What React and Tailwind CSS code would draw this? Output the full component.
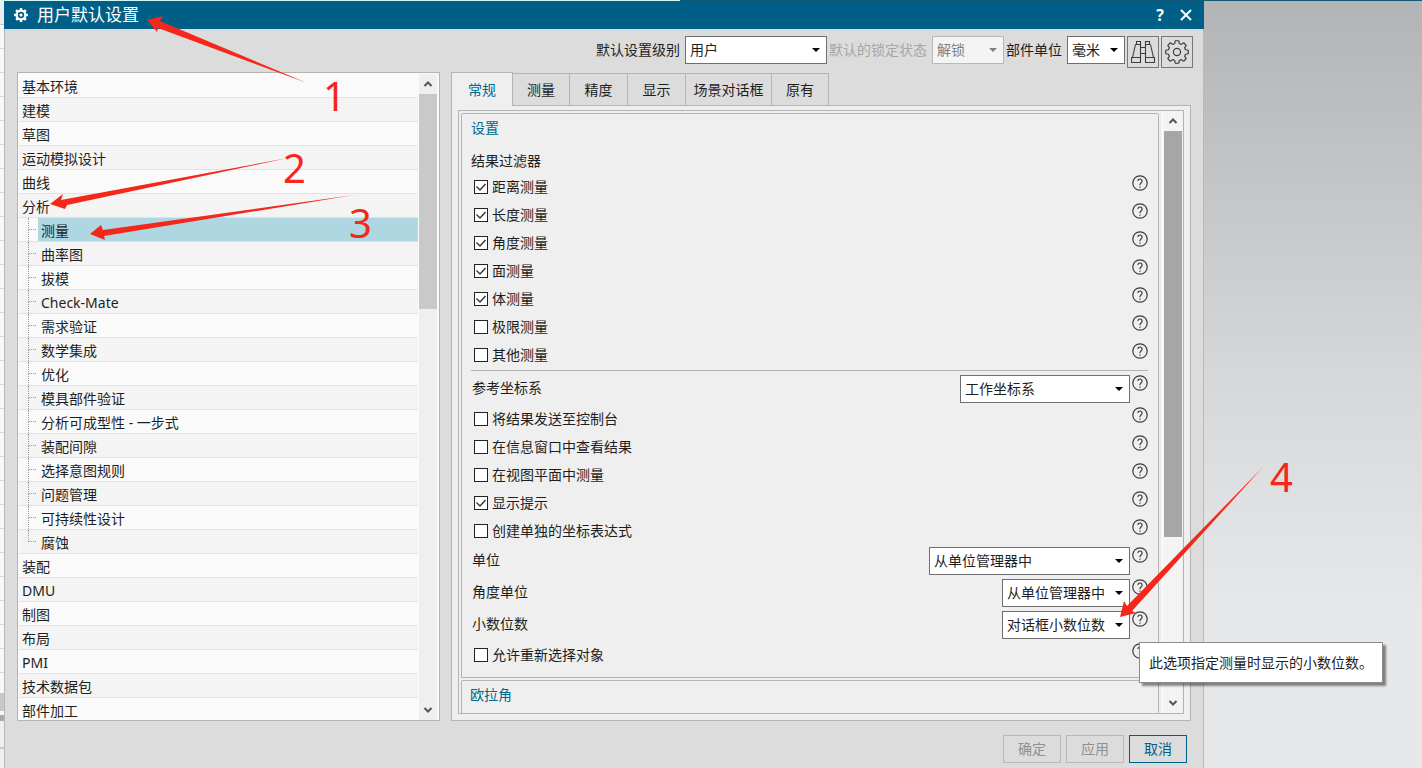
import React, { useState } from 'react';

const TREE = [
  { name: '基本环境' },
  { name: '建模' },
  { name: '草图' },
  { name: '运动模拟设计' },
  { name: '曲线' },
  { name: '分析' },
  { name: '测量', child: true },
  { name: '曲率图', child: true },
  { name: '拔模', child: true },
  { name: 'Check-Mate', child: true },
  { name: '需求验证', child: true },
  { name: '数学集成', child: true },
  { name: '优化', child: true },
  { name: '模具部件验证', child: true },
  { name: '分析可成型性 - 一步式', child: true },
  { name: '装配间隙', child: true },
  { name: '选择意图规则', child: true },
  { name: '问题管理', child: true },
  { name: '可持续性设计', child: true },
  { name: '腐蚀', child: true, last: true },
  { name: '装配' },
  { name: 'DMU' },
  { name: '制图' },
  { name: '布局' },
  { name: 'PMI' },
  { name: '技术数据包' },
  { name: '部件加工' },
];

const TABS = [
  { name: '常规', width: 'w-[62px]' },
  { name: '测量', width: 'w-[57px]' },
  { name: '精度', width: 'w-[58px]' },
  { name: '显示', width: 'w-[58px]' },
  { name: '场景对话框', width: 'w-[86px]' },
  { name: '原有', width: 'w-[57px]' },
];

const FILTERS = [
  { name: '距离测量', on: true },
  { name: '长度测量', on: true },
  { name: '角度测量', on: true },
  { name: '面测量', on: true },
  { name: '体测量', on: true },
  { name: '极限测量', on: false },
  { name: '其他测量', on: false },
];

const OPTIONS = [
  { name: '将结果发送至控制台', on: false },
  { name: '在信息窗口中查看结果', on: false },
  { name: '在视图平面中测量', on: false },
  { name: '显示提示', on: true },
  { name: '创建单独的坐标表达式', on: false },
];

const ARROWS = [
  '147,20 163,16 160,21 307,83 158,28 157,32',
  '50,204 63,194 61,200 288,158 67,205 65,209',
  '90,234 101,225 103,230 354,195 104,236 105,240',
  '1120,617 1124,601 1127,606 1263,467 1132,611 1136,613',
];

const MARKS = [
  { n: '1', x: 323, y: 111 },
  { n: '2', x: 283, y: 183 },
  { n: '3', x: 349, y: 238 },
  { n: '4', x: 1270, y: 492 },
];

// outline of an eight-toothed gear centred on 0,0
const gearPoints = (outer, inner) => {
  const pts = [];
  for (let i = 0; i < 8; i++) {
    [[-15, inner], [-9, outer], [9, outer], [15, inner]].forEach(([deg, r]) => {
      const a = ((i * 45 + deg) * Math.PI) / 180;
      pts.push(`${(r * Math.cos(a)).toFixed(2)},${(r * Math.sin(a)).toFixed(2)}`);
    });
  }
  return pts.join(' ');
};

const HelpIcon = () => (
  <button type="button" aria-label="帮助" className="mt-[2px] block h-4 w-4 shrink-0">
    <svg viewBox="0 0 16 16" className="h-4 w-4" fill="none" stroke="#3c3c3c" strokeWidth="1.2">
      <circle cx="8" cy="8" r="7.2" />
      <path d="M5.9 6.1a2.1 2.1 0 1 1 3.5 1.6C8.6 8.3 8 8.7 8 9.7v.5M8 11.4v1.3" />
    </svg>
  </button>
);

const Chevron = ({ up }) => (
  <svg viewBox="0 0 10 8" className="h-2 w-[10px]" fill="none" stroke="#555" strokeWidth="2">
    <path d={up ? 'M1.5 6L5 2.5 8.5 6' : 'M1.5 2L5 5.5 8.5 2'} />
  </svg>
);

const Select = ({ id, value, width, disabled }) => (
  <div className={`relative h-7 ${width}`}>
    <select
      id={id}
      disabled={disabled}
      className={`h-full w-full appearance-none border pl-1 text-sm leading-6 outline-none ${disabled ? 'border-[#b8b8b8] bg-[#f4f4f4] text-[#808080]' : 'border-[#6e6e6e] bg-white text-[#1e1e1e]'}`}
    >
      <option>{value}</option>
    </select>
    <svg viewBox="0 0 8 4" className={`pointer-events-none absolute top-3 right-[7px] h-1 w-2 ${disabled ? 'fill-[#808080]' : 'fill-black'}`}>
      <path d="M0 0h8L4 4z" />
    </svg>
  </div>
);

const CheckRow = ({ name, on }) => {
  const [checked, setChecked] = useState(on);

  return (
    <div className="flex h-7 items-start justify-between">
      <label className="flex h-7 items-center gap-1 pl-[3px]">
        <span className="relative h-[14px] w-[14px]">
          <input
            type="checkbox"
            checked={checked}
            onChange={() => setChecked(!checked)}
            className="block h-[14px] w-[14px] appearance-none border border-[#222] bg-white"
          />
          {checked && (
            <svg viewBox="0 0 14 14" className="pointer-events-none absolute inset-0" fill="none" stroke="#333" strokeWidth="1.4">
              <path d="M2.5 6.5l3.5 3.5 5.5-6" />
            </svg>
          )}
        </span>
        <span className="leading-7">{name}</span>
      </label>
      <HelpIcon />
    </div>
  );
};

const SelectRow = ({ id, label, value, width }) => (
  <div className="flex h-8 items-start justify-between">
    <label htmlFor={id} className="pl-px leading-[30px]">{label}</label>
    <div className="flex gap-[2px]">
      <div className="pt-[2px]">
        <Select id={id} value={value} width={width} />
      </div>
      <HelpIcon />
    </div>
  </div>
);

const TitleBar = () => (
  <header className="flex h-7 shrink-0 items-center bg-[#005f87] px-[10px] text-white">
    <svg viewBox="-7 -7 14 14" className="h-[14px] w-[14px]">
      <polygon points={gearPoints(7, 5.4)} fill="#fff" />
      <circle r="2.4" fill="none" stroke="#005f87" strokeWidth="1.6" />
    </svg>
    <h1 className="ml-[9px] flex-1 text-[17px] leading-7">用户默认设置</h1>
    <button type="button" aria-label="帮助" className="w-5 text-center text-base leading-7 font-bold">?</button>
    <button type="button" aria-label="关闭" className="ml-2 flex w-4 justify-center">
      <svg viewBox="0 0 12 12" className="h-3 w-3" stroke="#fff" strokeWidth="2">
        <path d="M1 1l10 10M11 1L1 11" />
      </svg>
    </button>
  </header>
);

const Toolbar = () => (
  <div className="flex h-[43px] shrink-0 items-start justify-end pt-[7px] pr-[10px]">
    <label htmlFor="level" className="mr-[5px] leading-7">默认设置级别</label>
    <Select id="level" value="用户" width="w-[142px]" />
    <label htmlFor="lock" className="mr-[5px] ml-[2px] leading-7 text-[#a6a6a6]">默认的锁定状态</label>
    <Select id="lock" value="解锁" width="w-[72px]" disabled />
    <label htmlFor="unit" className="mr-[5px] ml-[2px] leading-7">部件单位</label>
    <Select id="unit" value="毫米" width="w-[58px]" />
    <button type="button" aria-label="查找" className="ml-[2px] flex h-8 w-8 items-center justify-center border border-[#777]">
      <svg viewBox="0 0 24 24" className="h-6 w-6" fill="none" stroke="#3c3c3c" strokeWidth="1.1">
        <path d="M5.5 1.5h4v3h-4zM14.5 1.5h4v3h-4zM4.5 4.5h5v13M4.5 4.5L1.5 17.5M19.5 4.5h-5v13M19.5 4.5l3 13M.5 17.5h9v5h-9zM14.5 17.5h9v5h-9zM9.5 7.5h5v6h-5z" />
      </svg>
    </button>
    <button type="button" aria-label="选项" className="ml-[2px] flex h-8 w-8 items-center justify-center border border-[#777]">
      <svg viewBox="-12 -12 24 24" className="h-6 w-6" fill="none" stroke="#3c3c3c" strokeWidth="1.2" strokeLinejoin="round">
        <polygon points={gearPoints(11.4, 8.8)} />
        <circle r="3.6" />
      </svg>
    </button>
  </div>
);

const CategoryTree = () => (
  <nav className="flex w-[423px] shrink-0 overflow-hidden border border-[#b4b4b4] bg-[#fafafa] pt-px pl-px">
    <ul className="h-0 flex-1">
      {TREE.map((item, i) => (
        <li
          key={item.name}
          className={`flex h-6 border-b border-[#e2e2e2] ${i % 2 ? 'bg-[#f4f4f4]' : 'bg-[#fafafa]'}`}
        >
          {item.child && (
            <span className="flex w-[19px] justify-end">
              <span className="flex w-[10px] flex-col">
                <span className="h-3 w-2 border-b border-l border-dotted border-[#999]"></span>
                {!item.last && <span className="h-3 border-l border-dotted border-[#999]"></span>}
              </span>
            </span>
          )}
          <a
            href="#"
            className={`flex-1 truncate pl-[3px] leading-[26px] ${item.name === '测量' ? 'bg-[#afd7e1]' : ''}`}
          >
            {item.name}
          </a>
        </li>
      ))}
    </ul>
    <div className="mr-[2px] ml-px flex w-[18px] flex-col items-center bg-[#efefef]">
      <div className="flex h-5 items-center"><Chevron up /></div>
      <div className="h-[215px] w-full bg-[#c9c9c9]"></div>
      <div className="mt-auto flex h-5 items-center"><Chevron /></div>
    </div>
  </nav>
);

const Tabs = () => {
  const [active, setActive] = useState('常规');

  return (
    <div className="flex h-[33px] shrink-0 items-end">
      {TABS.map(tab => (
        <button
          key={tab.name}
          type="button"
          onClick={() => setActive(tab.name)}
          className={`border-t border-r border-[#b4b4b4] leading-8 ${tab.width} ${tab.name === active ? 'relative z-10 -mb-px h-[34px] border-l bg-[#efefef] text-[#00688b]' : 'h-8 bg-[#dcdcdc]'}`}
        >
          {tab.name}
        </button>
      ))}
    </div>
  );
};

const SettingsPanel = () => (
  <section className="flex min-w-0 flex-1 flex-col">
    <Tabs />
    <div className="flex flex-1 flex-col border border-[#b4b4b4] bg-[#efefef] p-[6px] pt-1">
      <div className="flex flex-1 border border-[#b4b4b4]">
        <div className="flex flex-1 flex-col pt-[2px] pl-[2px]">
          <div className="rounded-t-xs border border-[#b4b4b4] pr-[10px] pb-2 pl-[9px]">
            <h2 className="leading-7 text-[#00688b]">设置</h2>
            <h3 className="mt-[7px] leading-6">结果过滤器</h3>
            {FILTERS.map(f => <CheckRow key={f.name} {...f} />)}
            <div className="mt-px mb-[2px] h-px bg-[#b4b4b4]"></div>
            <SelectRow id="csys" label="参考坐标系" value="工作坐标系" width="w-[170px]" />
            {OPTIONS.map(o => <CheckRow key={o.name} {...o} />)}
            <SelectRow id="units" label="单位" value="从单位管理器中" width="w-[201px]" />
            <SelectRow id="angle" label="角度单位" value="从单位管理器中" width="w-32" />
            <SelectRow id="decimals" label="小数位数" value="对话框小数位数" width="w-32" />
            <CheckRow name="允许重新选择对象" on={false} />
          </div>
          <div className="mt-[2px] flex-1 rounded-t-xs border border-b-0 border-[#b4b4b4] pl-2">
            <h2 className="leading-7 text-[#00688b]">欧拉角</h2>
          </div>
        </div>
        <div className="mr-px ml-[3px] flex w-5 flex-col items-center border-l border-white bg-[#f4f4f4]">
          <div className="flex h-5 items-center"><Chevron up /></div>
          <div className="h-[406px] w-[18px] bg-[#a6a6a6]"></div>
          <div className="mt-auto flex h-5 items-center"><Chevron /></div>
        </div>
      </div>
    </div>
  </section>
);

const Footer = () => (
  <footer className="flex h-[47px] shrink-0 justify-end gap-[5px] pt-[14px] pr-4">
    <button type="button" disabled className="h-7 w-[58px] border border-[#b8b8b8] text-[#909090]">确定</button>
    <button type="button" disabled className="h-7 w-[58px] border border-[#b8b8b8] text-[#909090]">应用</button>
    <button type="button" className="h-7 w-[58px] border border-[#005f87] text-[#005f87]">取消</button>
  </footer>
);

// sliver of the main window left of the dialog
const WindowEdge = () => (
  <div className="flex w-1 shrink-0 flex-col overflow-hidden bg-[#f8f8f8]">
    <div className="h-6 shrink-0 border-b border-[#c8c8c8] bg-[#e8eff2]"></div>
    {[...Array(27)].map((_, i) => (
      <div key={i} className="h-6 shrink-0 border-b border-[#dcdcdc]"></div>
    ))}
    <div className="mt-5 h-[18px] shrink-0 bg-[#c8c8c8]"></div>
    <div className="mt-1 h-[6px] shrink-0 bg-[#aaa]"></div>
    <div className="h-7 shrink-0 border-b-2 border-[#c8c8c8] bg-[#efefef]"></div>
    <div className="flex-1 bg-[#efefef]"></div>
  </div>
);

const Annotations = () => (
  <div className="pointer-events-none absolute inset-0 z-20 overflow-hidden">
    <svg className="h-full w-full fill-[#f5261a]">
      {ARROWS.map(points => <polygon key={points} points={points} />)}
      {MARKS.map(m => (
        <text key={m.n} x={m.x} y={m.y} className="font-['Noto_Sans'] text-[40px]">{m.n}</text>
      ))}
    </svg>
  </div>
);

export default function App() {
  return (
    <div className="relative flex h-screen flex-col overflow-hidden bg-[#dcdcdc] font-['Noto_Sans','Noto_Sans_CJK_SC',sans-serif] text-sm text-[#1e1e1e]">
      <div className="flex h-px shrink-0">
        <div className="w-[680px] bg-[#d2f5f5]"></div>
        <div className="flex-1 bg-[#125a78]"></div>
      </div>
      <div className="flex min-h-0 flex-1">
        <WindowEdge />
        <main className="flex min-w-0 flex-1 flex-col">
          <TitleBar />
          <div className="flex min-h-0 flex-1 flex-col border-x border-[#b8b8b8]">
            <Toolbar />
            <div className="flex min-h-0 flex-1 gap-[11px] px-3">
              <CategoryTree />
              <SettingsPanel />
            </div>
            <Footer />
          </div>
        </main>
        <aside className="w-[218px] shrink-0 bg-linear-to-b from-[#b3b4b6] via-[#d6d8da] to-[#e6e8ea] to-80%"></aside>
      </div>
      <div role="tooltip" className="absolute top-[642px] left-[1139px] z-10 border border-[#8c8c8c] bg-white px-[9px] leading-[39px] shadow-[3px_3px_2px_rgba(0,0,0,0.45)]">
        此选项指定测量时显示的小数位数。
      </div>
      <Annotations />
    </div>
  );
}
